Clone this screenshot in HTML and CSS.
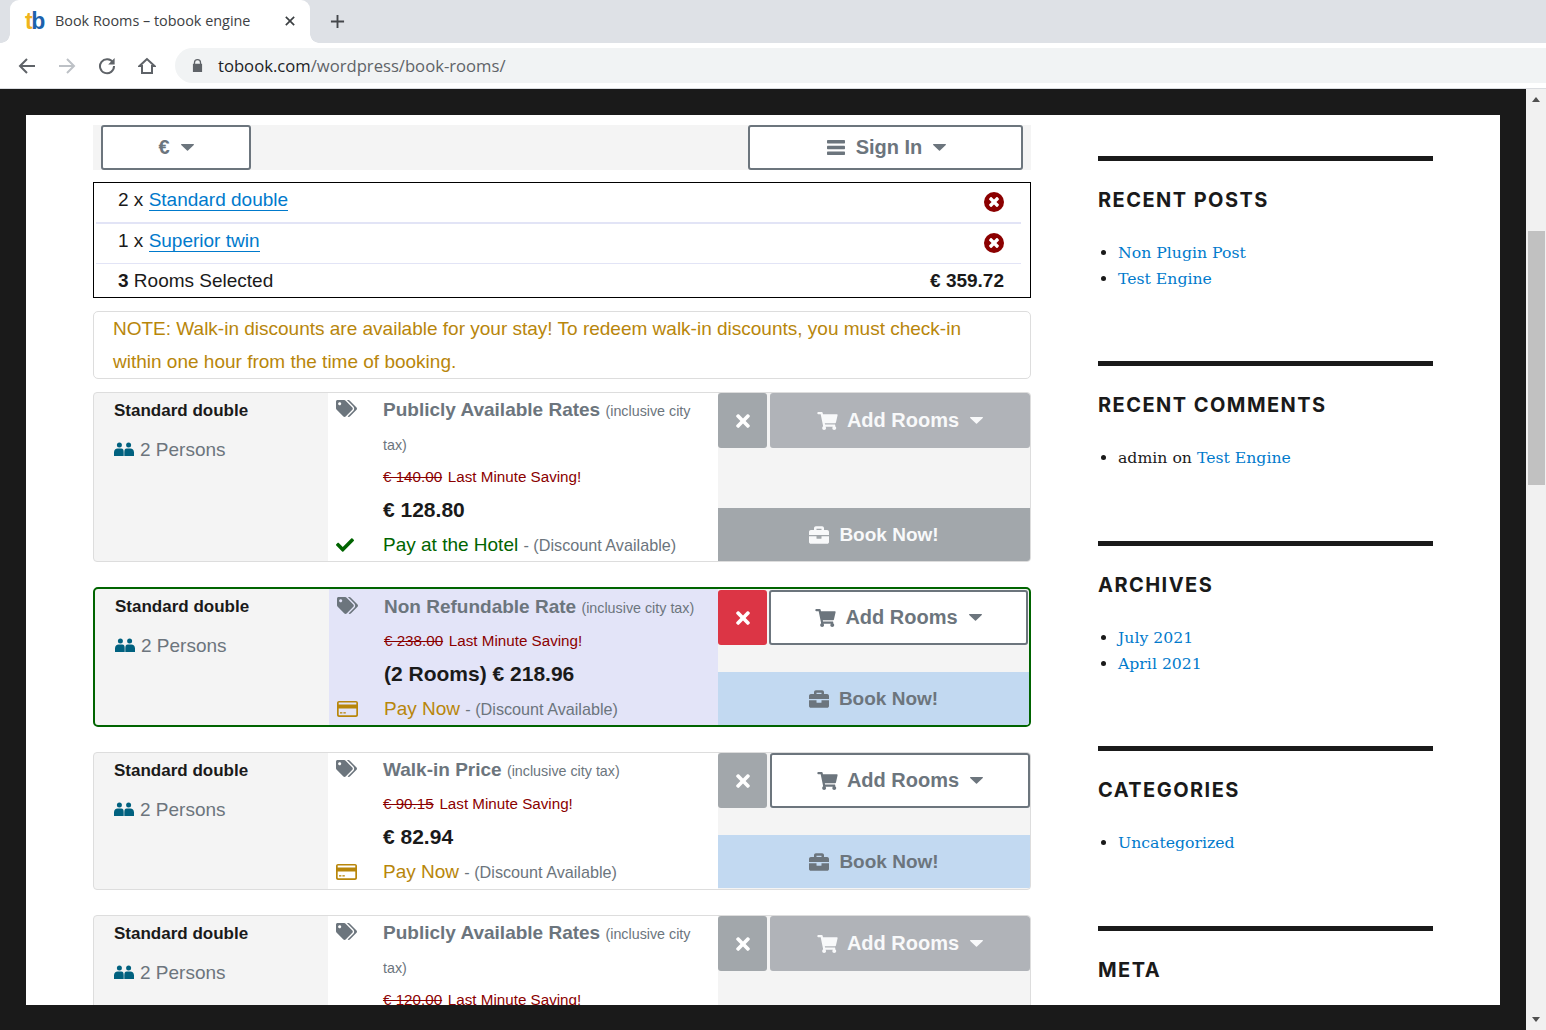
FILE: index.html
```html
<!DOCTYPE html>
<html>
<head>
    <title>Book Rooms – tobook engine</title>
    <link rel="stylesheet" href="styles.css">
</head>
<body>

    <svg class="sprite">
        <symbol id="i-tags" viewBox="0 0 640 512"><path d="M497.941 225.941L286.059 14.059A48 48 0 0 0 252.118 0H48C21.49 0 0 21.49 0 48v204.118a48 48 0 0 0 14.059 33.941l211.882 211.882c18.744 18.745 49.136 18.746 67.882 0l204.118-204.118c18.745-18.745 18.745-49.137 0-67.882zM112 160c-26.51 0-48-21.49-48-48s21.49-48 48-48 48 21.49 48 48-21.49 48-48 48zm513.941 133.823L421.823 497.941c-18.745 18.745-49.137 18.745-67.882 0l-.36-.36L527.64 323.522c16.999-16.999 26.36-39.6 26.36-63.64s-9.362-46.641-26.36-63.64L331.397 0h48.721a48 48 0 0 1 33.941 14.059l211.882 211.882c18.745 18.745 18.745 49.137 0 67.882z"/></symbol>
        <symbol id="i-check" viewBox="0 0 512 512"><path d="M173.898 439.404l-166.4-166.4c-9.997-9.997-9.997-26.206 0-36.204l36.203-36.204c9.997-9.998 26.207-9.998 36.204 0L192 312.69 432.095 72.596c9.997-9.997 26.207-9.997 36.204 0l36.203 36.204c9.997 9.997 9.997 26.206 0 36.204l-294.4 294.401c-9.998 9.997-26.207 9.997-36.204-.001z"/></symbol>
        <symbol id="i-times" viewBox="0 0 352 512"><path d="M242.72 256l100.07-100.07c12.28-12.28 12.28-32.19 0-44.48l-22.24-22.24c-12.28-12.28-32.19-12.28-44.48 0L176 189.28 75.93 89.21c-12.28-12.28-32.19-12.28-44.48 0L9.21 111.45c-12.28 12.28-12.28 32.19 0 44.48L109.28 256 9.21 356.07c-12.28 12.28-12.28 32.19 0 44.48l22.24 22.24c12.28 12.28 32.2 12.28 44.48 0L176 322.72l100.07 100.07c12.28 12.28 32.2 12.28 44.48 0l22.24-22.24c12.28-12.28 12.28-32.19 0-44.48L242.72 256z"/></symbol>
        <symbol id="i-cart" viewBox="0 0 576 512"><path d="M528.12 301.319l47.273-208C578.806 78.301 567.391 64 551.99 64H159.208l-9.166-44.81C147.758 8.021 137.93 0 126.529 0H24C10.745 0 0 10.745 0 24v16c0 13.255 10.745 24 24 24h69.883l70.248 343.435C147.325 417.1 136 435.222 136 456c0 30.928 25.072 56 56 56s56-25.072 56-56c0-15.674-6.447-29.835-16.824-40h209.647C430.447 426.165 424 440.326 424 456c0 30.928 25.072 56 56 56s56-25.072 56-56c0-22.172-12.888-41.332-31.579-50.405l5.517-24.276c3.413-15.018-8.002-29.319-23.403-29.319H218.117l-6.545-32h293.145c11.206 0 20.92-7.754 23.403-18.681z"/></symbol>
        <symbol id="i-case" viewBox="0 0 512 512"><path d="M320 336c0 8.84-7.16 16-16 16h-96c-8.84 0-16-7.16-16-16v-48H0v144c0 25.6 22.4 48 48 48h416c25.6 0 48-22.4 48-48V288H320v48zm144-208h-80V80c0-25.6-22.4-48-48-48H176c-25.6 0-48 22.4-48 48v48H48c-25.6 0-48 22.4-48 48v80h512v-80c0-25.6-22.4-48-48-48zm-144 0H192V96h128v32z"/></symbol>
        <symbol id="i-caret" viewBox="0 0 13 7"><path d="M0.6 0h11.8c.5 0 .8.6.4 1L7 6.6c-.3.3-.7.3-1 0L.2 1C-.2.6.1 0 .6 0z"/></symbol>
        <symbol id="i-bars" viewBox="0 0 18 15"><rect width="18" height="3.4" rx=".7"/><rect y="5.8" width="18" height="3.4" rx=".7"/><rect y="11.6" width="18" height="3.4" rx=".7"/></symbol>
        <symbol id="i-users" viewBox="0 0 20 14"><circle cx="5.4" cy="2.9" r="2.5"/><circle cx="14.6" cy="2.9" r="2.5"/><path d="M0 14v-3.6C0 8 1.6 6.6 3.6 6.6h3.6c2 0 2.5 1.4 2.5 3.8V14zM10.3 14v-3.6c0-2.4.5-3.8 2.5-3.8h3.6c2 0 3.6 1.4 3.6 3.8V14z"/></symbol>
        <symbol id="i-card" viewBox="0 0 21 16"><path fill-rule="evenodd" d="M2 0h17c1.1 0 2 .9 2 2v12c0 1.1-.9 2-2 2H2c-1.1 0-2-.9-2-2V2C0 .9.9 0 2 0zm-.3 7.4v6.4c0 .3.2.5.5.5h16.6c.3 0 .5-.2.5-.5V7.4zm0-5.6v1.7h17.6V1.8c0-.2-.2-.3-.4-.3H2.1c-.2 0-.4.1-.4.3z"/><rect x="3" y="11.2" width="2.4" height="1.3"/><rect x="6.4" y="11.2" width="2.4" height="1.3"/></symbol>
        <symbol id="i-remove" viewBox="0 0 20 20"><circle cx="10" cy="10" r="10" fill="#8b0000"/><path fill="#fff" d="M12.4 10l2.3-2.3c.4-.4.4-1 0-1.3l-1.1-1.1c-.4-.4-1-.4-1.3 0L10 7.6 7.7 5.3c-.4-.4-1-.4-1.3 0L5.3 6.4c-.4.4-.4 1 0 1.3L7.6 10l-2.3 2.3c-.4.4-.4 1 0 1.3l1.1 1.1c.4.4 1 .4 1.3 0l2.3-2.3 2.3 2.3c.4.4 1 .4 1.3 0l1.1-1.1c.4-.4.4-1 0-1.3z"/></symbol>
    </svg>

    <header class="browser">
        <div class="tabstrip">
            <div class="tab">
                <span class="favicon"><span class="fav-t">t</span><span class="fav-b">b</span></span>
                <span class="tab-title">Book Rooms – tobook engine</span>
                <svg class="tab-close" viewBox="0 0 12 12"><path d="M1 1l10 10M11 1L1 11"/></svg>
            </div>
            <svg class="new-tab" viewBox="0 0 16 16"><path d="M8 1v14M1 8h14"/></svg>
        </div>
        <div class="toolbar">
            <svg class="nav-icon" viewBox="0 0 18 18"><path d="M17 9H2M9 2L2 9l7 7"/></svg>
            <svg class="nav-icon nav-off" viewBox="0 0 18 18"><path d="M1 9h15M9 2l7 7-7 7"/></svg>
            <svg class="nav-icon" viewBox="0 0 18 18"><path d="M15 5.6A7 7 0 1 0 16 9"/><path class="nav-fill" d="M16.6 1v6.4h-6.4z"/></svg>
            <svg class="nav-icon" viewBox="0 0 18 18"><path d="M9 2L1.5 9H4v7h10V9h2.5zM7.5 16"/></svg>
            <div class="omnibox">
                <svg class="lock" viewBox="0 0 12 14"><path d="M10 5V4a4 4 0 0 0-8 0v1H1v9h10V5zM3.4 5V4a2.6 2.6 0 0 1 5.2 0v1z"/></svg>
                <span class="url"><span class="url-host">tobook.com</span>/wordpress/book-rooms/</span>
            </div>
        </div>
    </header>

    <div class="viewport">
        <div class="page">
            <div class="panel">

                <main class="content">
                    <div class="topbar">
                        <button class="top-btn currency-btn">
                            <span>€</span>
                            <svg class="caret"><use href="#i-caret"/></svg>
                        </button>
                        <button class="top-btn signin-btn">
                            <svg class="bars"><use href="#i-bars"/></svg>
                            <span>Sign In</span>
                            <svg class="caret"><use href="#i-caret"/></svg>
                        </button>
                    </div>

                    <div class="selected">
                        <div class="sel-row sel-first">
                            <span>2 x <a href="#">Standard double</a></span>
                            <svg class="sel-remove"><use href="#i-remove"/></svg>
                        </div>
                        <div class="sel-row sel-second">
                            <span>1 x <a href="#">Superior twin</a></span>
                            <svg class="sel-remove"><use href="#i-remove"/></svg>
                        </div>
                        <div class="sel-row sel-total">
                            <span><b>3</b> Rooms Selected</span>
                            <b>€ 359.72</b>
                        </div>
                    </div>

                    <div class="note">NOTE: Walk-in discounts are available for your stay! To redeem walk-in discounts, you must check-in within one hour from the time of booking.</div>

                    <!-- rate 1 -->
                    <div class="card">
                        <div class="room">
                            <div class="room-name">Standard double</div>
                            <div class="room-persons"><svg class="users"><use href="#i-users"/></svg>2 Persons</div>
                        </div>
                        <div class="rate">
                            <div class="rate-line line-title line-wrap">
                                <svg class="icon-tags"><use href="#i-tags"/></svg>
                                <div><span class="rate-name">Publicly Available Rates</span> <small>(inclusive city tax)</small></div>
                            </div>
                            <div class="rate-line line-was">
                                <i></i>
                                <div><s>€ 140.00</s> Last Minute Saving!</div>
                            </div>
                            <div class="rate-line line-price">
                                <i></i>
                                <div>€ 128.80</div>
                            </div>
                            <div class="rate-line line-pay">
                                <svg class="icon-check"><use href="#i-check"/></svg>
                                <div><span class="pay-hotel">Pay at the Hotel</span> <span class="pay-note">- (Discount Available)</span></div>
                            </div>
                        </div>
                        <div class="actions">
                            <div class="actions-top">
                                <button class="btn-remove"><svg><use href="#i-times"/></svg></button>
                                <button class="btn-add btn-add-off">
                                    <svg class="cart"><use href="#i-cart"/></svg>
                                    <span>Add Rooms</span>
                                    <svg class="caret"><use href="#i-caret"/></svg>
                                </button>
                            </div>
                            <button class="btn-book btn-book-off"><svg class="case"><use href="#i-case"/></svg>Book Now!</button>
                        </div>
                    </div>

                    <!-- rate 2, the one picked -->
                    <div class="card card-on">
                        <div class="room">
                            <div class="room-name">Standard double</div>
                            <div class="room-persons"><svg class="users"><use href="#i-users"/></svg>2 Persons</div>
                        </div>
                        <div class="rate rate-on">
                            <div class="rate-line line-title">
                                <svg class="icon-tags"><use href="#i-tags"/></svg>
                                <div><span class="rate-name">Non Refundable Rate</span> <small>(inclusive city tax)</small></div>
                            </div>
                            <div class="rate-line line-was">
                                <i></i>
                                <div><s>€ 238.00</s> Last Minute Saving!</div>
                            </div>
                            <div class="rate-line line-price">
                                <i></i>
                                <div>(2 Rooms) € 218.96</div>
                            </div>
                            <div class="rate-line line-pay">
                                <svg class="icon-card"><use href="#i-card"/></svg>
                                <div><span class="pay-now">Pay Now</span> <span class="pay-note">- (Discount Available)</span></div>
                            </div>
                        </div>
                        <div class="actions">
                            <div class="actions-top">
                                <button class="btn-remove btn-remove-on"><svg><use href="#i-times"/></svg></button>
                                <button class="btn-add">
                                    <svg class="cart"><use href="#i-cart"/></svg>
                                    <span>Add Rooms</span>
                                    <svg class="caret"><use href="#i-caret"/></svg>
                                </button>
                            </div>
                            <button class="btn-book"><svg class="case"><use href="#i-case"/></svg>Book Now!</button>
                        </div>
                    </div>

                    <!-- rate 3 -->
                    <div class="card">
                        <div class="room">
                            <div class="room-name">Standard double</div>
                            <div class="room-persons"><svg class="users"><use href="#i-users"/></svg>2 Persons</div>
                        </div>
                        <div class="rate">
                            <div class="rate-line line-title">
                                <svg class="icon-tags"><use href="#i-tags"/></svg>
                                <div><span class="rate-name">Walk-in Price</span> <small>(inclusive city tax)</small></div>
                            </div>
                            <div class="rate-line line-was">
                                <i></i>
                                <div><s>€ 90.15</s> Last Minute Saving!</div>
                            </div>
                            <div class="rate-line line-price">
                                <i></i>
                                <div>€ 82.94</div>
                            </div>
                            <div class="rate-line line-pay">
                                <svg class="icon-card"><use href="#i-card"/></svg>
                                <div><span class="pay-now">Pay Now</span> <span class="pay-note">- (Discount Available)</span></div>
                            </div>
                        </div>
                        <div class="actions actions-gap">
                            <div class="actions-top">
                                <button class="btn-remove"><svg><use href="#i-times"/></svg></button>
                                <button class="btn-add">
                                    <svg class="cart"><use href="#i-cart"/></svg>
                                    <span>Add Rooms</span>
                                    <svg class="caret"><use href="#i-caret"/></svg>
                                </button>
                            </div>
                            <button class="btn-book"><svg class="case"><use href="#i-case"/></svg>Book Now!</button>
                        </div>
                    </div>

                    <!-- rate 4, runs off the bottom -->
                    <div class="card">
                        <div class="room">
                            <div class="room-name">Standard double</div>
                            <div class="room-persons"><svg class="users"><use href="#i-users"/></svg>2 Persons</div>
                        </div>
                        <div class="rate">
                            <div class="rate-line line-title line-wrap">
                                <svg class="icon-tags"><use href="#i-tags"/></svg>
                                <div><span class="rate-name">Publicly Available Rates</span> <small>(inclusive city tax)</small></div>
                            </div>
                            <div class="rate-line line-was">
                                <i></i>
                                <div><s>€ 120.00</s> Last Minute Saving!</div>
                            </div>
                        </div>
                        <div class="actions">
                            <div class="actions-top">
                                <button class="btn-remove"><svg><use href="#i-times"/></svg></button>
                                <button class="btn-add btn-add-off">
                                    <svg class="cart"><use href="#i-cart"/></svg>
                                    <span>Add Rooms</span>
                                    <svg class="caret"><use href="#i-caret"/></svg>
                                </button>
                            </div>
                        </div>
                    </div>
                </main>

                <aside class="sidebar">
                    <section class="widget widget-tall">
                        <h2>Recent Posts</h2>
                        <ul>
                            <li><a href="#">Non Plugin Post</a></li>
                            <li><a href="#">Test Engine</a></li>
                        </ul>
                    </section>
                    <section class="widget">
                        <h2>Recent Comments</h2>
                        <ul>
                            <li>admin on <a href="#">Test Engine</a></li>
                        </ul>
                    </section>
                    <section class="widget widget-tall">
                        <h2>Archives</h2>
                        <ul>
                            <li><a href="#">July 2021</a></li>
                            <li><a href="#">April 2021</a></li>
                        </ul>
                    </section>
                    <section class="widget">
                        <h2>Categories</h2>
                        <ul>
                            <li><a href="#">Uncategorized</a></li>
                        </ul>
                    </section>
                    <section class="widget">
                        <h2>Meta</h2>
                    </section>
                </aside>

            </div>
        </div>

        <div class="scrollbar">
            <span class="arrow-up"></span>
            <div class="thumb"></div>
            <span class="arrow-down"></span>
        </div>
    </div>

</body>
</html>
```

FILE: styles.css
```css
* {
    box-sizing: border-box;
}

html, body {
    margin: 0;
    height: 100%;
    overflow: hidden;
}

body {
    display: flex;
    flex-direction: column;
    font-family: "Liberation Sans", Arial, sans-serif;
    color: #1a1a1a;
}

.sprite {
    display: none;
}

/* browser window */
.browser {
    flex: none;
    height: 89px;
    border-bottom: 1px solid #dadce0;
    background: #fff;
}

.tabstrip {
    display: flex;
    align-items: center;
    height: 43px;
    padding-left: 10px;
    background: #dee1e6;
}

.tab {
    position: relative;
    display: flex;
    align-items: center;
    align-self: stretch;
    width: 300px;
    padding: 0 15px 1px 15px;
    background: #fff;
    border-radius: 9px 9px 0 0;
}

.tab::before, .tab::after {
    content: "";
    position: absolute;
    bottom: 0;
    width: 9px;
    height: 9px;
    background: radial-gradient(circle at 0 0, #dee1e6 8.5px, #fff 9px);
}

.tab::before {
    left: -9px;
}

.tab::after {
    right: -9px;
    background: radial-gradient(circle at 100% 0, #dee1e6 8.5px, #fff 9px);
}

.favicon {
    width: 30px;
    font-size: 23px;
    font-weight: bold;
    letter-spacing: -1.5px;
}

.fav-t {
    color: #f0b41c;
}

.fav-b {
    color: #1c62ac;
}

.tab-title {
    flex: 1;
    margin-top: -2px;
    font-family: "Open Sans", sans-serif;
    font-size: 14.4px;
    color: #3c4043;
    white-space: nowrap;
}

.tab-close {
    width: 10px;
    height: 10px;
    fill: none;
    stroke: #3c4043;
    stroke-width: 2;
}

.new-tab {
    width: 15px;
    height: 15px;
    margin-left: 20px;
    fill: none;
    stroke: #44474b;
    stroke-width: 2;
}

.toolbar {
    display: flex;
    align-items: center;
    height: 45px;
    padding: 0 0 0 18px;
}

.nav-icon {
    flex: none;
    width: 18px;
    height: 18px;
    margin-right: 22px;
    fill: none;
    stroke: #5f6368;
    stroke-width: 2;
}

.nav-off {
    stroke: #bdc1c6;
}

.nav-fill {
    fill: #5f6368;
    stroke: none;
}

.omnibox {
    flex: 1;
    display: flex;
    align-items: center;
    height: 35px;
    margin-left: -3px;
    padding-left: 17px;
    background: #f1f3f4;
    border-radius: 18px 0 0 18px;
}

.lock {
    width: 11px;
    height: 13px;
    margin-right: 15px;
    fill: #5f6368;
}

.url {
    font-family: "Open Sans", sans-serif;
    font-size: 16.65px;
    color: #5f6368;
}

.url-host {
    color: #202124;
}

/* page behind the browser chrome */
.viewport {
    flex: 1;
    display: flex;
    min-height: 0;
}

.page {
    flex: 1;
    padding: 26px 26px 25px;
    background: #1a1a1a;
}

.panel {
    display: flex;
    height: 100%;
    overflow: hidden;
    background: #fff;
}

.scrollbar {
    flex: none;
    display: flex;
    flex-direction: column;
    align-items: center;
    width: 20px;
    background: #f1f1f1;
}

.arrow-up, .arrow-down {
    width: 0;
    height: 0;
    border-left: 4.5px solid transparent;
    border-right: 4.5px solid transparent;
}

.arrow-up {
    margin-top: 8px;
    border-bottom: 5px solid #505050;
}

.arrow-down {
    margin-top: auto;
    margin-bottom: 8px;
    border-top: 5px solid #505050;
}

.thumb {
    width: 17px;
    height: 254px;
    margin: 129px 0 0 1px;
    background: #c1c1c1;
}

/* left column */
.content {
    flex: none;
    width: 938px;
    margin-left: 67px;
    padding-top: 10px;
}

.topbar {
    display: flex;
    justify-content: space-between;
    height: 45px;
    padding: 0 8px;
    background: #f4f4f4;
}

button {
    font-family: inherit;
    padding: 0;
    border: 0;
}

.top-btn {
    display: flex;
    align-items: center;
    justify-content: center;
    background: #fff;
    border: 2px solid #6c757d;
    border-radius: 3px;
    color: #6c757d;
    font-size: 20px;
    font-weight: bold;
}

.currency-btn {
    width: 150px;
}

.signin-btn {
    width: 275px;
    padding-left: 2px;
}

.caret {
    width: 13px;
    height: 7px;
    margin-left: 11px;
    fill: currentColor;
}

.bars {
    width: 18px;
    height: 15px;
    margin-right: 11px;
    fill: currentColor;
}

.selected {
    margin-top: 12px;
    height: 116px;
    border: 1px solid #000;
    font-size: 19px;
}

.sel-row {
    display: flex;
    align-items: center;
    justify-content: space-between;
    margin: 0 9px 0 2px;
    padding: 0 17px 0 22px;
}

.sel-first {
    height: 41px;
    padding-bottom: 6px;
    border-bottom: 2px solid #e2e4f6;
}

.sel-second {
    height: 40px;
    padding-bottom: 5px;
    border-bottom: 1px solid #e2e4f6;
}

.sel-total {
    height: 33px;
}

.sel-remove {
    width: 20px;
    height: 20px;
    margin-top: 4px;
}

.selected a {
    color: #007acc;
    text-decoration: none;
    border-bottom: 1px solid #007acc;
}

.note {
    margin-top: 13px;
    height: 68px;
    padding: 0 19px;
    border: 1px solid #ddd;
    border-radius: 5px;
    color: #b8860b;
    font-size: 19px;
    line-height: 33px;
}

/* rate cards */
.card {
    display: grid;
    grid-template-columns: 234px 1fr 312px;
    min-height: 138px;
    margin-top: 25px;
    overflow: hidden;
    background: #f4f4f4;
    border: 1px solid #ddd;
    border-radius: 4px;
}

.note + .card {
    margin-top: 13px;
}

.card-on {
    grid-template-columns: 234px 1fr 311px;
    min-height: 140px;
    border: 2px solid #006400;
    border-radius: 5px;
}

.room {
    padding: 1px 0 0 20px;
}

.room-name {
    font-size: 17px;
    font-weight: bold;
    line-height: 34px;
}

.room-persons {
    display: flex;
    align-items: center;
    margin-top: 5px;
    font-size: 19px;
    line-height: 34px;
    color: #6c757d;
}

.users {
    width: 20px;
    height: 14px;
    margin: -2px 6px 0 0;
    fill: #00617f;
}

.rate {
    padding: 0 8px;
    background: #fff;
}

.rate-on {
    padding-top: 1px;
    background: #e3e4f8;
}

.rate-line {
    display: grid;
    grid-template-columns: 47px 1fr;
    line-height: 33px;
}

.line-title {
    font-size: 19px;
    line-height: 34px;
}

.line-wrap {
    margin-bottom: -1px;
}

.rate-name {
    font-weight: bold;
    color: #6c757d;
}

small {
    font-size: 14.3px;
    line-height: 1;
    color: #6c757d;
}

.icon-tags {
    width: 21px;
    height: 17px;
    margin-top: 7px;
    fill: #6c757d;
}

.icon-check {
    width: 18px;
    height: 18px;
    margin-top: 10px;
    fill: #006400;
}

.icon-card {
    width: 21px;
    height: 16px;
    margin-top: 11px;
    fill: #b8860b;
}

.line-was {
    font-size: 15.2px;
    color: #8b0000;
}

s {
    margin-right: 1.5px;
}

.line-price {
    font-size: 21px;
    font-weight: bold;
}

.line-pay {
    margin-bottom: -2px;
    font-size: 19px;
    line-height: 37px;
}

.pay-hotel {
    color: #006400;
}

.pay-now {
    color: #b8860b;
}

.pay-note {
    font-size: 16.2px;
    line-height: 1;
    color: #6c757d;
}

.actions {
    display: flex;
    flex-direction: column;
}

.actions-gap {
    padding-bottom: 1px;
}

.actions-top {
    display: flex;
    gap: 3px;
}

.card-on .actions {
    padding-top: 1px;
}

.card-on .actions-top {
    gap: 2px;
    margin-right: 1px;
}

.btn-remove {
    flex: none;
    width: 49px;
    height: 55px;
    background: #a2a7ab;
    border-radius: 3px;
    color: #fff;
}

.btn-remove-on {
    background: #dc3545;
}

.btn-remove svg {
    width: 14px;
    height: 20px;
    margin-top: 3px;
    fill: currentColor;
}

.btn-add {
    flex: 1;
    display: flex;
    align-items: center;
    justify-content: center;
    height: 55px;
    background: #fff;
    border: 2px solid #6c757d;
    border-radius: 3px;
    color: #6c757d;
    font-size: 20px;
    font-weight: bold;
}

.btn-add-off {
    background: #b0b3b8;
    border-color: #b0b3b8;
    color: #f8f9fa;
}

.cart {
    width: 21px;
    height: 18px;
    margin-right: 9px;
    fill: currentColor;
}

.btn-book {
    display: flex;
    align-items: center;
    justify-content: center;
    height: 53px;
    margin-top: auto;
    background: #c2d9f1;
    color: #6c757d;
    font-size: 19px;
    font-weight: bold;
}

.btn-book-off {
    background: #a2a7ab;
    color: #f8f9fa;
}

.case {
    width: 20px;
    height: 20px;
    margin-right: 10px;
    fill: currentColor;
}

/* right column */
.sidebar {
    flex: none;
    width: 335px;
    margin-left: 67px;
    padding-top: 41px;
    font-family: "DejaVu Serif", serif;
    font-size: 15.7px;
}

.widget {
    height: 155px;
    margin-bottom: 25px;
    border-top: 5px solid #1a1a1a;
}

.widget-tall {
    height: 180px;
}

.widget h2 {
    margin: 0;
    padding-top: 26px;
    font-family: Inter, sans-serif;
    font-size: 20px;
    font-weight: 700;
    line-height: 26px;
    letter-spacing: 1.45px;
    text-transform: uppercase;
}

.widget ul {
    margin: 27px 0 0;
    padding-left: 20px;
    line-height: 26px;
}

.widget a {
    color: #007acc;
    text-decoration: none;
}
```
